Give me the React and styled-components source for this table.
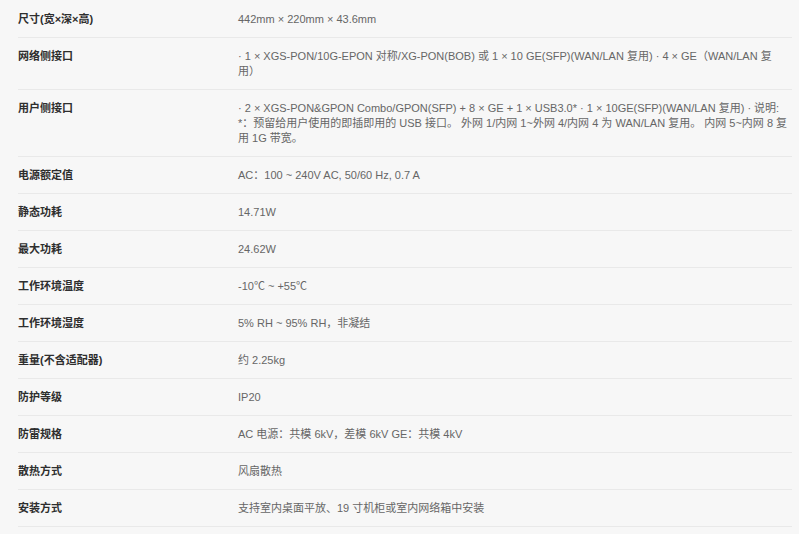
import React from "react";
import styled, { createGlobalStyle } from "styled-components";

const Global = createGlobalStyle`
  html, body { margin: 0; padding: 0; background: #f7f7f7; }
  body { font-family: "Liberation Sans", "Noto Sans CJK SC", sans-serif; }
`;

const Table = styled.div`
  width: 774px;
  margin: 1px 0 0 18px;
  display: flex;
  flex-direction: column;
`;

const Row = styled.div`
  display: grid;
  grid-template-columns: 220px 1fr;
  padding: 11px 0 10px;
  border-bottom: 1px solid #e9e9e9;
  font-size: 11px;
  line-height: 15px;
`;

const Label = styled.div`
  color: #2e2e2e;
  font-weight: 600;
`;

const Value = styled.div`
  color: #666666;
  font-weight: 400;
  text-spacing-trim: space-all;
`;

const specs = [
  ["尺寸(宽×深×高)", "442mm × 220mm × 43.6mm"],
  ["网络侧接口", "· 1 × XGS-PON/10G-EPON 对称/XG-PON(BOB) 或 1 × 10 GE(SFP)(WAN/LAN 复用) · 4 × GE（WAN/LAN 复用）"],
  ["用户侧接口", "· 2 × XGS-PON&GPON Combo/GPON(SFP) + 8 × GE + 1 × USB3.0* · 1 × 10GE(SFP)(WAN/LAN 复用) · 说明: *：预留给用户使用的即插即用的 USB 接口。 外网 1/内网 1~外网 4/内网 4 为 WAN/LAN 复用。 内网 5~内网 8 复用 1G 带宽。"],
  ["电源额定值", "AC：100 ~ 240V AC, 50/60 Hz, 0.7 A"],
  ["静态功耗", "14.71W"],
  ["最大功耗", "24.62W"],
  ["工作环境温度", "-10℃ ~ +55℃"],
  ["工作环境湿度", "5% RH ~ 95% RH，非凝结"],
  ["重量(不含适配器)", "约 2.25kg"],
  ["防护等级", "IP20"],
  ["防雷规格", "AC 电源：共模 6kV，差模 6kV GE：共模 4kV"],
  ["散热方式", "风扇散热"],
  ["安装方式", "支持室内桌面平放、19 寸机柜或室内网络箱中安装"],
];

export default function App() {
  return (
    <>
      <Global />
      <Table>
        {specs.map(([k, v]) => (
          <Row key={k}>
            <Label>{k}</Label>
            <Value>{v}</Value>
          </Row>
        ))}
      </Table>
    </>
  );
}
